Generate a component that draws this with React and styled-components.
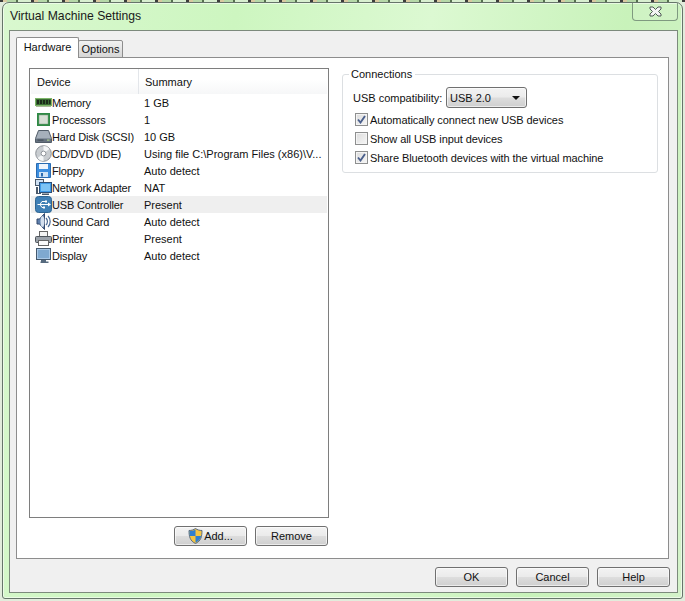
import React from 'react'
import styled, { createGlobalStyle } from 'styled-components'

const Global = createGlobalStyle`
  html, body {
    margin: 0;
    padding: 0;
    width: 685px;
    height: 601px;
    overflow: hidden;
    background:
      repeating-linear-gradient(90deg, #3c3c3c 0 3px, #d9c9a0 3px 7px, #b5d8a8 7px 16px, #55704f 16px 18px, #d8efd0 18px 31px) top / 100% 2px no-repeat,
      #e2ecdc;
  }
  * {
    box-sizing: border-box;
  }
`

const Frame = styled.div`
  width: 681px;
  height: 597px;
  margin: 2px;
  padding: 0 4px 5px 6px;
  display: flex;
  flex-direction: column;
  border: 1px solid #66756a;
  border-radius: 7px 7px 3px 3px;
  background: linear-gradient(100deg, #d9f8cf 0%, #cdf6c0 30%, #dcf9d2 55%, #c8f2ba 80%, #d4f2ca 100%);
  box-shadow: inset 0 0 0 1px rgba(255, 255, 255, 0.55);
  font-family: "Liberation Sans", Arial, sans-serif;
  font-size: 11px;
  color: #111;
`

const TitleBar = styled.div`
  height: 27px;
  flex: none;
  display: flex;
  justify-content: space-between;
  align-items: flex-start;
`

const Title = styled.div`
  padding: 6px 0 0 1px;
  font-size: 12.2px;
  line-height: 15px;
  color: #1a1a1a;
`

const CloseButton = styled.div`
  width: 46px;
  height: 18px;
  display: flex;
  align-items: center;
  justify-content: center;
  border: 1px solid #7f9a80;
  border-top: none;
  border-radius: 0 0 4px 4px;
  background: rgba(255, 255, 255, 0.12);
`

const Client = styled.div`
  flex: 1;
  display: flex;
  flex-direction: column;
  padding: 6px 8px 0 6px;
  border: 1px solid #7c8a7c;
  background: #f0f0f0;
`

const TabStrip = styled.div`
  display: flex;
  align-items: flex-end;
  height: 21px;
  position: relative;
  z-index: 1;
  margin-bottom: -1px;
`

const Tab = styled.div`
  display: flex;
  align-items: center;
  justify-content: center;
  width: ${p => (p.$active ? '63px' : '45px')};
  height: ${p => (p.$active ? '21px' : '18px')};
  padding-bottom: ${p => (p.$active ? '2px' : '0')};
  margin-left: ${p => (p.$active ? '0' : '-1px')};
  border: 1px solid #8d8d8d;
  border-bottom: ${p => (p.$active ? 'none' : '1px solid #8d8d8d')};
  border-radius: 2px 2px 0 0;
  background: ${p => (p.$active ? '#fff' : 'linear-gradient(#f2f2f2, #d6d6d6)')};
`

const TabPage = styled.div`
  height: 502px;
  flex: none;
  display: grid;
  grid-template-columns: 300px 316px;
  column-gap: 13px;
  padding: 10px 0 0 12px;
  border: 1px solid #8d8d8d;
  background: #fff;
`

const LeftColumn = styled.div`
  display: flex;
  flex-direction: column;
`

const DeviceList = styled.div`
  height: 450px;
  padding: 0 1px 1px;
  border: 1px solid #7e7e7e;
  background: #fff;
`

const HeaderRow = styled.div`
  display: grid;
  grid-template-columns: 107px 1fr;
  height: 25px;
  align-items: center;
  background: linear-gradient(#fff 40%, #f6f7f8);
`

const HeaderCell = styled.div`
  height: 100%;
  display: flex;
  align-items: center;
  padding-left: 6px;
  border-left: ${p => (p.$summary ? '1px solid #e3e6ea' : 'none')};
`

const Row = styled.div`
  display: grid;
  grid-template-columns: 109px 1fr;
  height: 17px;
  align-items: center;
  padding-left: 4px;
  background: ${p => (p.$selected ? '#efefef' : 'transparent')};
`

const DeviceCell = styled.div`
  display: flex;
  align-items: center;
  white-space: nowrap;
  letter-spacing: -0.15px;
`

const IconSlot = styled.span`
  width: 17px;
  height: 17px;
  flex: none;
  display: block;
`

const SummaryCell = styled.div`
  white-space: nowrap;
`

const ListActions = styled.div`
  display: flex;
  justify-content: flex-end;
  gap: 8px;
  margin-top: 8px;
  margin-right: 1px;
`

const Button = styled.button`
  width: 73px;
  height: 20px;
  display: flex;
  align-items: center;
  justify-content: center;
  gap: 1px;
  padding: 0;
  border: 1px solid #707070;
  border-radius: 3px;
  background: linear-gradient(#f3f3f3 0%, #ebebeb 48%, #dddddd 52%, #cfcfcf 100%);
  box-shadow: inset 0 0 0 1px rgba(255, 255, 255, 0.6);
  font: inherit;
  color: #111;
`

const GroupBox = styled.fieldset`
  height: 105px;
  margin: 0;
  padding: 0 0 0 10px;
  border: 1px solid #dcdfe2;
  border-radius: 3px;
  min-width: 0;
`

const GroupTitle = styled.legend`
  padding: 0 3px 0 2px;
  margin-left: -4px;
  line-height: 13px;
`

const CompatRow = styled.div`
  display: flex;
  align-items: center;
  height: 21px;
  margin-top: 6px;
  margin-bottom: 2px;
`

const CompatLabel = styled.span`
  width: 93px;
  flex: none;
`

const Select = styled.div`
  width: 81px;
  height: 21px;
  display: flex;
  align-items: center;
  justify-content: space-between;
  padding: 0 6px 0 3px;
  border: 1px solid #707070;
  border-radius: 3px;
  background: linear-gradient(#f3f3f3 0%, #ebebeb 48%, #dddddd 52%, #cfcfcf 100%);
  box-shadow: inset 0 0 0 1px rgba(255, 255, 255, 0.6);
`

const Arrow = styled.span`
  width: 0;
  height: 0;
  border-left: 4px solid transparent;
  border-right: 4px solid transparent;
  border-top: 4px solid #111;
`

const CheckRow = styled.div`
  display: flex;
  align-items: center;
  gap: 2px;
  height: 19px;
  padding-left: 2px;
  letter-spacing: -0.08px;
`

const Box = styled.span`
  width: 13px;
  height: 13px;
  flex: none;
  display: flex;
  align-items: center;
  justify-content: center;
  border: 1px solid #8e8f8f;
  background: linear-gradient(135deg, #dcdcdc, #f6f6f6);
  box-shadow: inset 0 0 0 1px #f4f4f4;
`

const Footer = styled.div`
  flex: 1;
  display: flex;
  justify-content: flex-end;
  align-items: flex-start;
  gap: 8px;
  padding-top: 8px;
  margin-right: -1px;
`

const MemoryIcon = () => (
  <svg width="17" height="17" viewBox="0 0 17 17">
    <rect x="0.500" y="4.500" width="16" height="7" fill="#3a6b34" stroke="#7cb568" />
    <path d="M2 6h2v4H2zM5 6h2v4H5zM8 6h2v4H8zM11 6h2v4h-2zM14 6h1.500v4H14z" fill="#1b2c1a" />
    <path d="M1 12h15v1H1z" fill="#a9b79a" />
  </svg>
)

const ProcessorIcon = () => (
  <svg width="17" height="17" viewBox="0 0 17 17">
    <rect x="2" y="2" width="13" height="13" fill="#2f8a45" />
    <rect x="4" y="4" width="9" height="9" fill="#d7dfd5" stroke="#7e9c80" strokeWidth="0.500" />
  </svg>
)

const DiskIcon = () => (
  <svg width="17" height="17" viewBox="0 0 17 17">
    <path d="M3.500 2.500h10l3 8v4H.500v-4z" fill="#a6b0bb" stroke="#515c68" />
    <path d="M1 10.500h15v3.500H1z" fill="#66727f" />
    <rect x="12" y="11.600" width="2.500" height="1" fill="#b8e090" />
    <rect x="2.500" y="11.600" width="6" height="1" fill="#3e4853" />
  </svg>
)

const DiscIcon = () => (
  <svg width="17" height="17" viewBox="0 0 17 17">
    <circle cx="8.500" cy="8.500" r="7.800" fill="#c9cdd1" stroke="#8d9298" />
    <path d="M8.500 1a7.500 7.500 0 0 1 6 3l-4.500 3.200a2 2 0 0 0-1.500-.7zM8.500 16a7.500 7.500 0 0 1-6-3l4.500-3.200a2 2 0 0 0 1.500.7z" fill="#f4f6f7" />
    <circle cx="8.500" cy="8.500" r="2.400" fill="#fff" stroke="#8f949a" />
  </svg>
)

const FloppyIcon = () => (
  <svg width="17" height="17" viewBox="0 0 17 17">
    <path d="M1.500 1.500h14v14h-14z" fill="#3d8fe0" stroke="#2a6bb0" />
    <rect x="4" y="2" width="9" height="5" fill="#eef5fc" />
    <rect x="4" y="10" width="9" height="5" fill="#cfe3f5" />
    <rect x="6" y="11" width="2" height="3.500" fill="#2a6bb0" />
  </svg>
)

const NetworkIcon = () => (
  <svg width="17" height="17" viewBox="0 0 17 17">
    <rect x="0.500" y="0.500" width="8" height="6" fill="#cfe0f2" stroke="#4b5a6b" />
    <rect x="4.500" y="3.500" width="12" height="10" fill="#3f9be8" stroke="#2b4f78" />
    <rect x="6" y="5" width="9" height="7" fill="#7cc3f5" />
    <path d="M7 14.500h7v1.500H7zM1 8h2v6h3v1H1z" fill="#4b5a6b" />
  </svg>
)

const UsbIcon = () => (
  <svg width="17" height="17" viewBox="0 0 17 17">
    <rect x="0.500" y="0.500" width="16" height="16" rx="3" fill="#3f7fb5" stroke="#2f6592" />
    <path d="M2.500 8.500h11M10 5.500H7l-2 3M8 11.500H7l-2-3" fill="none" stroke="#fff" />
    <path d="M13 6.500l3 2-3 2z" fill="#fff" />
    <rect x="10" y="4.500" width="2" height="2" fill="#fff" />
    <rect x="8" y="10.500" width="2" height="2" fill="#fff" />
  </svg>
)

const SoundIcon = () => (
  <svg width="17" height="17" viewBox="0 0 17 17">
    <path d="M2 6h2.500l5-5.500v16l-5-5.500H2z" fill="#5f80ad" stroke="#33496d" />
    <ellipse cx="7.500" cy="8.500" rx="2" ry="5.500" fill="#d3dfee" />
    <path d="M11 5a5 5 0 0 1 0 7M13 3a8 8 0 0 1 0 11" fill="none" stroke="#4a6a96" strokeWidth="1.200" />
  </svg>
)

const PrinterIcon = () => (
  <svg width="17" height="17" viewBox="0 0 17 17">
    <rect x="4.500" y="1.500" width="8" height="5" fill="#f4f4f4" stroke="#666" />
    <rect x="0.500" y="6.500" width="16" height="6" rx="1" fill="#9ba2aa" stroke="#4e555c" />
    <rect x="3.500" y="10.500" width="10" height="5" fill="#fafafa" stroke="#666" />
  </svg>
)

const DisplayIcon = () => (
  <svg width="17" height="17" viewBox="0 0 17 17">
    <rect x="1.500" y="1.500" width="14" height="11" fill="#a9c8e6" stroke="#44596e" />
    <rect x="3" y="3" width="11" height="8" fill="#7fa9d0" />
    <path d="M6 13h5v1.500h2.500V16h-8v-1.500H6z" fill="#566a7e" />
  </svg>
)

const ShieldIcon = () => (
  <svg width="15" height="16" viewBox="0 0 15 16">
    <path d="M7.500.5c2 1.400 4 2 6.500 2 0 6-1 10.500-6.500 13C2 13 1 8.500 1 2.500c2.500 0 4.500-.6 6.500-2z" fill="#f5c542" stroke="#5a6a80" />
    <path d="M7.500 1.500v6.500H1.800C1.500 6.500 1.500 4.500 1.500 3c2.200 0 4.300-.5 6-1.500zM7.500 8h5.700c-.8 3-2.700 5.500-5.700 6.800z" fill="#2f7fd0" />
  </svg>
)

const CheckMark = () => (
  <svg width="9" height="9" viewBox="0 0 9 9">
    <path d="M1 4.500l2.500 3L8 1" fill="none" stroke="#4a5f8c" strokeWidth="1.900" />
  </svg>
)

const CloseGlyph = () => (
  <svg width="13" height="11" viewBox="0 0 13 11">
    <path d="M1 1h3l2.500 2.500L9 1h3v2L9.500 5.500 12 8v2H9L6.500 7.500 4 10H1V8l2.500-2.500L1 3z" fill="#f4f4f4" stroke="#4e5a55" />
  </svg>
)

const devices = [
  { name: 'Memory', summary: '1 GB', icon: MemoryIcon },
  { name: 'Processors', summary: '1', icon: ProcessorIcon },
  { name: 'Hard Disk (SCSI)', summary: '10 GB', icon: DiskIcon },
  { name: 'CD/DVD (IDE)', summary: 'Using file C:\\Program Files (x86)\\V...', icon: DiscIcon },
  { name: 'Floppy', summary: 'Auto detect', icon: FloppyIcon },
  { name: 'Network Adapter', summary: 'NAT', icon: NetworkIcon },
  { name: 'USB Controller', summary: 'Present', icon: UsbIcon, selected: true },
  { name: 'Sound Card', summary: 'Auto detect', icon: SoundIcon },
  { name: 'Printer', summary: 'Present', icon: PrinterIcon },
  { name: 'Display', summary: 'Auto detect', icon: DisplayIcon },
]

const options = [
  { label: 'Automatically connect new USB devices', checked: true },
  { label: 'Show all USB input devices', checked: false },
  { label: 'Share Bluetooth devices with the virtual machine', checked: true },
]

export default function App() {
  return (
    <>
      <Global />
      <Frame>
        <TitleBar>
          <Title>Virtual Machine Settings</Title>
          <CloseButton>
            <CloseGlyph />
          </CloseButton>
        </TitleBar>
        <Client>
          <TabStrip>
            <Tab $active>Hardware</Tab>
            <Tab>Options</Tab>
          </TabStrip>
          <TabPage>
            <LeftColumn>
              <DeviceList>
                <HeaderRow>
                  <HeaderCell>Device</HeaderCell>
                  <HeaderCell $summary>Summary</HeaderCell>
                </HeaderRow>
                {devices.map(d => (
                  <Row key={d.name} $selected={d.selected}>
                    <DeviceCell>
                      <IconSlot>
                        <d.icon />
                      </IconSlot>
                      {d.name}
                    </DeviceCell>
                    <SummaryCell>{d.summary}</SummaryCell>
                  </Row>
                ))}
              </DeviceList>
              <ListActions>
                <Button>
                  <ShieldIcon />
                  Add...
                </Button>
                <Button>Remove</Button>
              </ListActions>
            </LeftColumn>
            <div>
              <GroupBox>
                <GroupTitle>Connections</GroupTitle>
                <CompatRow>
                  <CompatLabel>USB compatibility:</CompatLabel>
                  <Select>
                    USB 2.0
                    <Arrow />
                  </Select>
                </CompatRow>
                {options.map(o => (
                  <CheckRow key={o.label}>
                    <Box>{o.checked && <CheckMark />}</Box>
                    {o.label}
                  </CheckRow>
                ))}
              </GroupBox>
            </div>
          </TabPage>
          <Footer>
            <Button>OK</Button>
            <Button>Cancel</Button>
            <Button>Help</Button>
          </Footer>
        </Client>
      </Frame>
    </>
  )
}
